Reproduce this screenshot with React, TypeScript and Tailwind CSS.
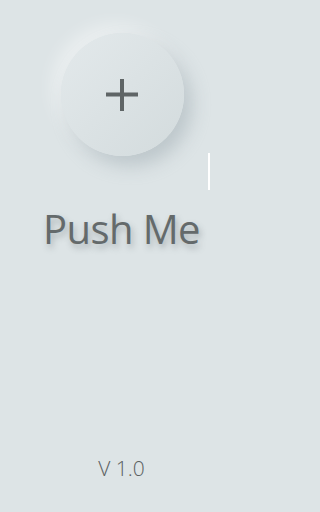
export default function App() {
  return (
    <div className="min-h-screen w-full bg-[#dde4e6]">
      <div className="relative flex h-[512px] w-[243px] flex-col items-center overflow-hidden font-['Open_Sans',sans-serif]">
        <button className="mt-[33px] ml-[1px] flex h-[123px] w-[123px] shrink-0 items-center justify-center rounded-full bg-gradient-to-br from-[#e3e9eb] to-[#d3dbdd] shadow-[8px_10px_18px_rgba(150,165,170,0.45),-8px_-8px_18px_rgba(255,255,255,0.45)]">
          <svg width="34" height="34" viewBox="0 0 34 34">
            <rect x="1" y="14.5" width="32" height="4" fill="#5f6566" />
            <rect x="15" y="1" width="4" height="32" fill="#5f6566" />
          </svg>
        </button>
        <span className="absolute left-[208px] top-[153px] h-[37px] w-[2px] bg-white" />
        <h1 className="mt-[45px] text-[40px] leading-[56px] tracking-[-0.6px] text-[#646a6b] [text-shadow:2px_4px_6px_rgba(90,100,105,0.4)]">
          Push Me
        </h1>
        <div className="mt-auto mb-[31px] text-[21px] leading-[26px] font-light text-[#5b6162]">V 1.0</div>
      </div>
    </div>
  );
}
